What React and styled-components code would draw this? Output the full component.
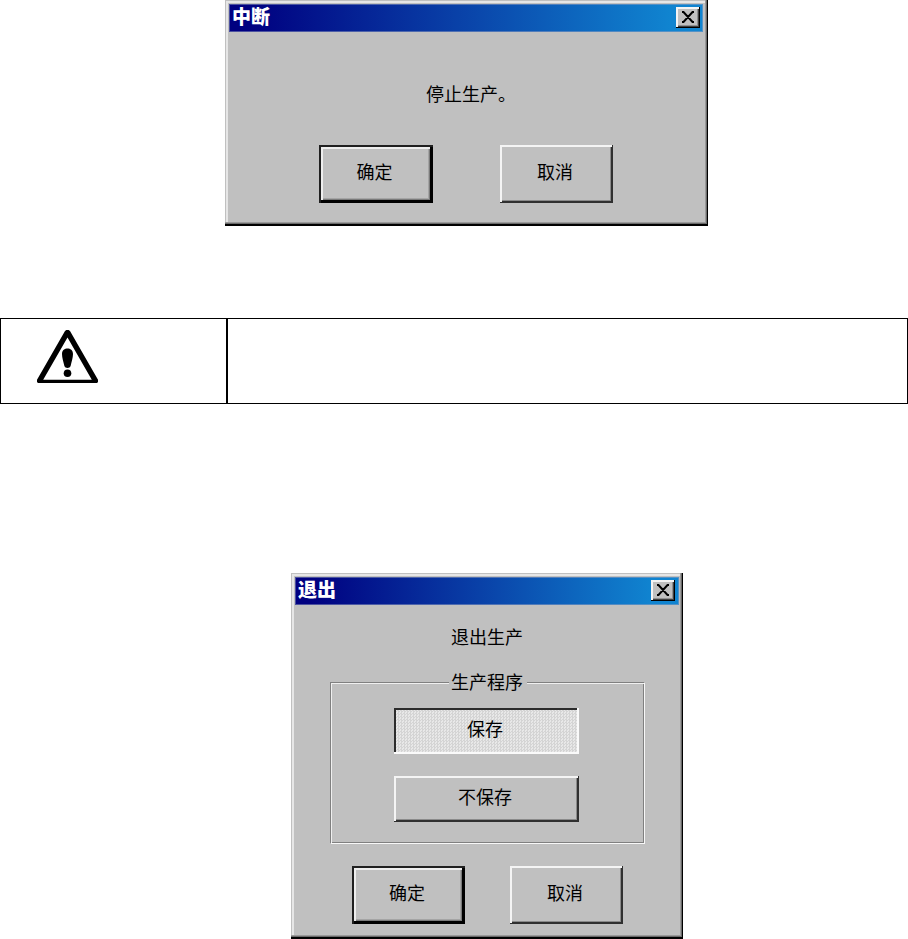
import styled, { createGlobalStyle } from "styled-components";

const GlobalStyle = createGlobalStyle`
    * {
        box-sizing: border-box;
    }

    body {
        margin: 0;
        background-color: #fff;
        font-family: "Noto Sans CJK SC", "Liberation Sans", sans-serif;
        font-size: 18px;
        color: #000;
    }
`;

const Page = styled.div`
    display: flex;
    flex-direction: column;
    width: 908px;
    height: 939px;
    overflow: hidden;
`;

const Dialog = styled.div`
    display: flex;
    flex-direction: column;
    align-items: center;
    width: ${({ $width }) => $width}px;
    height: ${({ $height }) => $height}px;
    margin-left: ${({ $left }) => $left}px;
    padding: 4px 4px 0 4px;
    background-color: #c0c0c0;
    box-shadow:
        inset 0 -2px #000,
        inset -1px 0 #000,
        inset -2px -3px #6a6a6a,
        inset -3px -4px #9a9a9a,
        inset 1px 1px #c0c0c0,
        inset 3px 3px #e6e6e6;
`;

const TitleBar = styled.div`
    display: flex;
    justify-content: space-between;
    align-self: stretch;
    height: 28px;
    margin-right: ${({ $inset }) => $inset}px;
    padding: 3px ${({ $inset }) => 4 - $inset}px 0 3px;
    background: linear-gradient(to right, #000080 4%, #0a48ac 53%, #1084d0 93%);
    box-shadow: inset 0 0 0 1px rgba(150, 160, 190, 0.5);
`;

const Title = styled.span`
    font-size: 19px;
    font-weight: 900;
    line-height: 18px;
    color: #fff;
`;

const CloseButton = styled.button`
    display: flex;
    align-items: center;
    justify-content: center;
    width: 24px;
    height: 21px;
    padding: 0 0 1px 0;
    border: none;
    background-color: #c0c0c0;
    box-shadow:
        inset -1px -1px #000,
        inset 2px 2px #f4f4f4,
        inset -2px -2px #404040,
        inset -3px -3px #909090;
`;

const Message = styled.p`
    height: 24px;
    margin: ${({ $top }) => $top}px 0 ${({ $bottom }) => $bottom || 0}px ${({ $shift }) => $shift || 0}px;
    line-height: 24px;
    white-space: nowrap;
`;

const Actions = styled.div`
    display: flex;
    align-self: flex-start;
    gap: ${({ $gap }) => $gap}px;
    margin: ${({ $top }) => $top}px 0 0 ${({ $left }) => $left}px;
`;

const bevels = {
    raised: `
        inset -1px -1px #303030,
        inset 2px 2px #f4f4f4,
        inset -2px -2px #303030,
        inset -3px -3px #8a8a8a
    `,
    primary: `
        inset 2px 2px #202020,
        inset -3px -3px #000,
        inset 4px 4px #eee,
        inset -4px -4px #7a7a7a,
        inset -5px -5px #a4a4a4
    `,
    pressed: `
        inset -2px -2px #fafafa,
        inset 2px 2px #2c2c2c
    `,
};

const Button = styled.button`
    width: ${({ $width }) => $width || 113}px;
    height: ${({ $height }) => $height || 58}px;
    padding: 0 3px 6px 0;
    border: none;
    background-color: #c0c0c0;
    box-shadow: ${({ $bevel }) => bevels[$bevel || "raised"]};
    font: inherit;
    line-height: 24px;
    color: #000;
`;

const ToggleButton = styled(Button)`
    background: ${({ $bevel }) =>
        $bevel === "pressed"
            ? "repeating-conic-gradient(#d4d4d4 0 25%, #e8e8e8 0 50%) 0 0 / 3px 3px"
            : "#c0c0c0"};
`;

const Group = styled.fieldset`
    display: flex;
    flex-direction: column;
    align-items: center;
    gap: 22px;
    width: 315px;
    height: 174px;
    min-width: 0;
    margin: 0 0 0 1px;
    padding: 14px 2px 0 0;
    border: 1px solid;
    border-color: #808080 #f8f8f8 #f8f8f8 #808080;
    box-shadow: inset 1px 1px #f0f0f0, inset -1px -1px #808080;
`;

const Legend = styled.legend`
    height: 24px;
    margin: -1px auto 0 118px;
    padding: 0 4px 0 2px;
    line-height: 23px;
    background-color: #c0c0c0;
`;

const Notice = styled.div`
    display: grid;
    grid-template-columns: 227px 1fr;
    height: 86px;
    margin: 92px 0 169px;
    border: 1px solid #000;
`;

const NoticeIcon = styled.div`
    padding: 11px 0 0 36px;
    border-right: 2px solid #000;
`;

const CloseIcon = () => (
    <svg width="14" height="12" viewBox="0 0 14 12">
        <path
            d="M1 1H2.5L11.5 11H13M13 1H11.5L2.5 11H1"
            fill="none"
            stroke="#000"
            strokeWidth="2"
        />
    </svg>
);

const WarningIcon = () => (
    <svg width="61" height="53" viewBox="0 0 61 53">
        <path d="M29.3 0H31.7L33 1L61 49.8V52L60 53H1L0 52V49.8L28 1ZM30.5 7.6L6.2 49.7H54.8Z" fillRule="evenodd" />
        <path d="M25 24C25 16.8 36 16.8 36 24C36 27.5 34.6 31.5 33.6 36C33 38.6 28 38.6 27.4 36C26.4 31.5 25 27.5 25 24Z" />
        <circle cx="30.5" cy="43.2" r="3.8" />
    </svg>
);

const Header = ({ title, inset }) => (
    <TitleBar $inset={inset}>
        <Title>{title}</Title>
        <CloseButton aria-label="关闭">
            <CloseIcon />
        </CloseButton>
    </TitleBar>
);

const App = () => {
    return (
        <Page>
            <GlobalStyle />
            <Dialog $width={483} $height={226} $left={225}>
                <Header title="中断" inset={1} />
                <Message $top={49} $bottom={40} $shift={9}>停止生产。</Message>
                <Actions $top={0} $left={90} $gap={67}>
                    <Button $width={114} $bevel="primary">确定</Button>
                    <Button>取消</Button>
                </Actions>
            </Dialog>
            <Notice>
                <NoticeIcon>
                    <WarningIcon />
                </NoticeIcon>
            </Notice>
            <Dialog $width={392} $height={366} $left={291}>
                <Header title="退出" inset={0} />
                <Message $top={19} $bottom={22}>退出生产</Message>
                <Group>
                    <Legend>生产程序</Legend>
                    <ToggleButton $width={185} $height={46} $bevel="pressed">保存</ToggleButton>
                    <ToggleButton $width={185} $height={46}>不保存</ToggleButton>
                </Group>
                <Actions $top={22} $left={57} $gap={45}>
                    <Button $bevel="primary">确定</Button>
                    <Button>取消</Button>
                </Actions>
            </Dialog>
        </Page>
    )
}

export default App;
